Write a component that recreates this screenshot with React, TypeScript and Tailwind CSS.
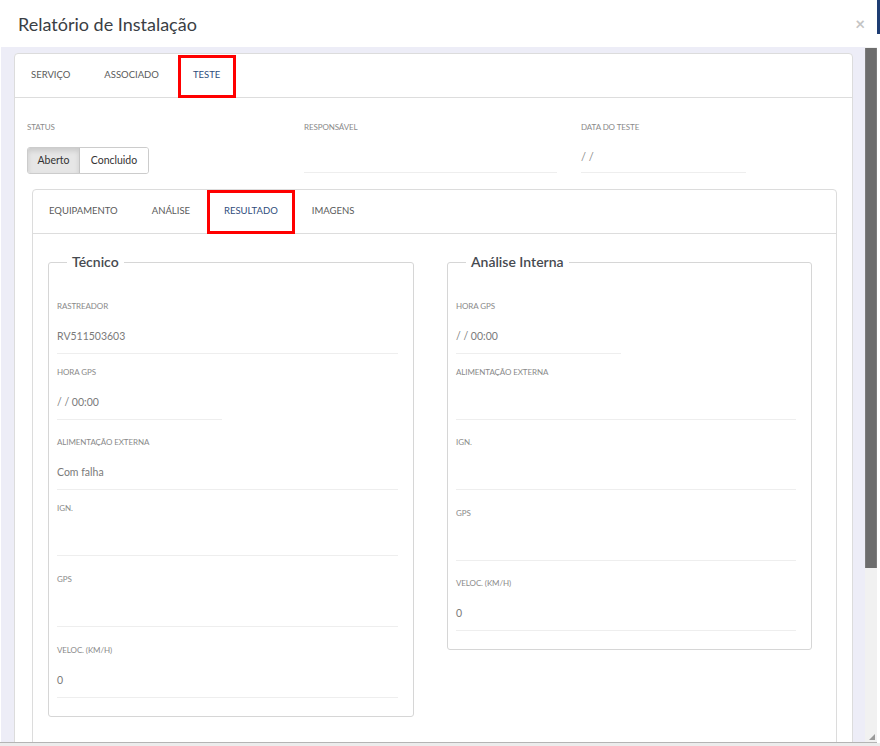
import React from "react";

type FieldProps = {
  label: string;
  value?: string;
  short?: boolean;
  mt: string;
};

const tecnico: FieldProps[] = [
  { label: "Rastreador", value: "RV511503603", mt: "mt-[28px]" },
  { label: "Hora GPS", value: "/ / 00:00", short: true, mt: "mt-[12px]" },
  { label: "Alimentação Externa", value: "Com falha", mt: "mt-[16px]" },
  { label: "Ign.", mt: "mt-[12px]" },
  { label: "GPS", mt: "mt-[17px]" },
  { label: "Veloc. (km/h)", value: "0", mt: "mt-[17px]" },
];

const interna: FieldProps[] = [
  { label: "Hora GPS", value: "/ / 00:00", short: true, mt: "mt-[28px]" },
  { label: "Alimentação Externa", mt: "mt-[12px]" },
  { label: "Ign.", mt: "mt-[16px]" },
  { label: "GPS", mt: "mt-[17px]" },
  { label: "Veloc. (km/h)", value: "0", mt: "mt-[16px]" },
];

const Field = ({ label, value, short, mt }: FieldProps) => (
  <div className={mt}>
    <div className="h-[12px] text-[8px] leading-[12px] uppercase tracking-[-0.1px] text-[#8a8a8a]">{label}</div>
    <div
      className={`h-[42px] pt-[16px] text-[10.5px] leading-[16px] text-[#7a7a7a] border-b border-[#eeeeee] ${
        short ? "w-[165px]" : "w-full"
      }`}
    >
      {value}
    </div>
  </div>
);

const Group = ({ title, fields }: { title: string; fields: FieldProps[] }) => (
  <fieldset className="m-0 border border-[#d6d6d6] rounded-[3px] pl-[8px] pr-[15px] pb-[18px] pt-0 min-w-0">
    <legend className="ml-[10px] px-[5px] text-[14px] leading-[20px] font-semibold text-[#464a50]">{title}</legend>
    {fields.map((f) => (
      <Field key={f.label} {...f} />
    ))}
  </fieldset>
);

const Label = ({ children }: { children: React.ReactNode }) => (
  <div className="h-[10px] text-[8px] leading-[10px] uppercase tracking-[-0.1px] text-[#8a8a8a]">{children}</div>
);

export default function App() {
  return (
    <div className="w-[880px] h-[746px] flex flex-col bg-[#ececec] overflow-hidden font-['Lato',sans-serif]">
      <div className="flex h-[743px]">
        {/* modal */}
        <div className="w-[877px] h-full flex flex-col bg-white border-b border-[#b4b4b4]">
          <div className="h-[47px] shrink-0 flex items-center justify-between pl-[18px] pr-[12px]">
            <h1 className="text-[18px] leading-[22px] text-[#3a3e44]">Relatório de Instalação</h1>
            <span className="text-[17px] font-bold leading-none text-[#c4c4c4]">×</span>
          </div>

          <div className="flex-1 flex min-h-0 bg-[#ededf7] pl-[13px] border-l border-white">
            <div className="flex-1 min-w-0 overflow-hidden pt-[6px] pr-[12px]">
              <div className="bg-white border border-[#dcdcdc] rounded-[4px]">
                {/* top tabs */}
                <div className="h-[44px] flex border-b border-[#dddddd] text-[9.5px] uppercase">
                  <div className="pl-[16px] pr-[17px] flex items-center text-[#5a5a5a]">Serviço</div>
                  <div className="px-[17px] flex items-center text-[#5a5a5a]">Associado</div>
                  <div className="relative px-[17px] flex items-center text-[#2f4d7c]">
                    Teste
                    <div className="absolute left-[2px] right-[1px] top-[1px] -bottom-[1px] border-[3px] border-[#ff0000]" />
                  </div>
                </div>

                {/* status row */}
                <div className="pt-[24px] pl-[12px] flex">
                  <div className="w-[277px]">
                    <Label>Status</Label>
                    <div className="mt-[15px] inline-flex h-[27px] border border-[#cccccc] rounded-[3px] overflow-hidden text-[10.5px] text-[#333]">
                      <div className="w-[52px] flex items-center justify-center bg-[#e6e6e6] border-r border-[#c4c4c4] shadow-[inset_0_3px_5px_rgba(0,0,0,0.12)]">
                        Aberto
                      </div>
                      <div className="w-[68px] flex items-center justify-center bg-white">Concluido</div>
                    </div>
                  </div>
                  <div className="w-[277px]">
                    <Label>Responsável</Label>
                    <div className="w-[253px] h-[41px] border-b border-[#eeeeee]" />
                  </div>
                  <div>
                    <Label>Data do teste</Label>
                    <div className="w-[165px] h-[41px] pt-[17px] text-[11px] leading-[16px] text-[#8a8a8a] border-b border-[#eeeeee]">
                      / /
                    </div>
                  </div>
                </div>

                {/* inner card */}
                <div className="mt-[15px] ml-[17px] mr-[15px] border border-[#dcdcdc] rounded-[4px]">
                  <div className="h-[44px] flex border-b border-[#dddddd] text-[9.5px] uppercase">
                    <div className="pl-[16px] pr-[17px] flex items-center text-[#5a5a5a]">Equipamento</div>
                    <div className="px-[17px] flex items-center text-[#5a5a5a]">Análise</div>
                    <div className="relative px-[17px] flex items-center text-[#2f4d7c]">
                      Resultado
                      <div className="absolute left-0 right-0 top-0 -bottom-[1px] border-[3px] border-[#ff0000]" />
                    </div>
                    <div className="px-[17px] flex items-center text-[#5a5a5a]">Imagens</div>
                  </div>

                  <div className="pt-[18px] pl-[15px] pb-[60px] grid grid-cols-[366px_365px] gap-x-[33px] items-start">
                    <Group title="Técnico" fields={tecnico} />
                    <Group title="Análise Interna" fields={interna} />
                  </div>
                </div>
              </div>
            </div>

            {/* scrollbar */}
            <div className="w-[12px] h-full bg-[#f1f1f1] flex flex-col">
              <div className="mt-[1px] h-[520px] bg-[#6d6d6d] border-x border-[#7c7c7c]" />
              <div className="flex-1" />
              <svg width="12" height="9" viewBox="0 0 12 9" className="mb-[1px]">
                <path d="M10 2 L10 8 L4 8 Z" fill="#9a9a9a" />
              </svg>
            </div>
          </div>
        </div>
        <div className="w-[3px] flex flex-col bg-white">
          <div className="h-[34px] bg-[#1e3d73]" />
        </div>
      </div>
    </div>
  );
}
